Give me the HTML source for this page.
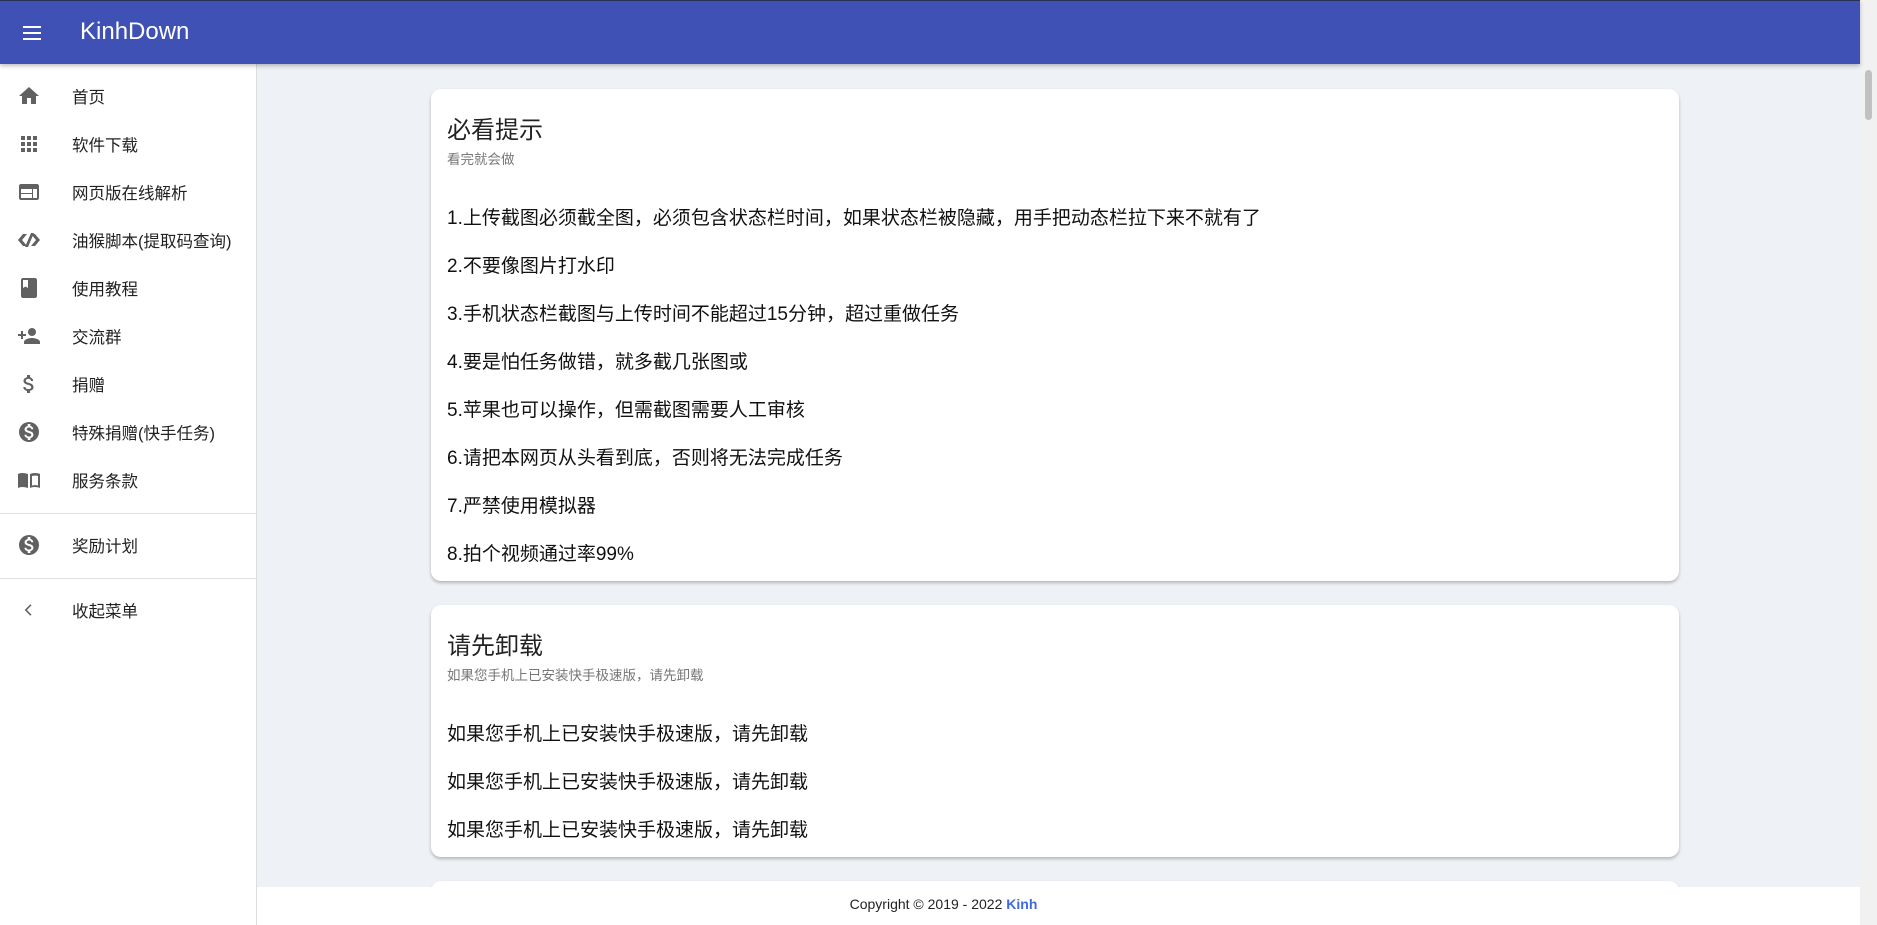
<!DOCTYPE html>
<html style="overflow:hidden;height:925px"><head><meta charset="utf-8"><style>
*{box-sizing:border-box;margin:0;padding:0}
body{width:1877px;height:925px;overflow:hidden;background:#eef1f6;font-family:"Liberation Sans","Noto Sans CJK SC",sans-serif;position:relative}
.hdr{position:absolute;left:0;top:0;width:1860px;height:64px;background:#3f51b5;border-top:1px solid #2a2f55;box-shadow:0 2px 4px rgba(0,0,0,.25);z-index:3}
.hdr .t{position:absolute;left:80px;top:17px;color:#fff;font-size:24px}
.menu{position:absolute;left:23px;top:25px;width:18px}
.menu i{display:block;height:2px;background:#fff;margin-bottom:4px}
.side{position:absolute;left:0;top:64px;width:257px;height:861px;background:#fff;border-right:1px solid #ddd;z-index:2}
.it{position:absolute;left:0;height:48px;width:256px}
.it svg{position:absolute;left:17px;top:12px;width:24px;height:24px;fill:#616161}
.it span{position:absolute;left:72px;top:12px;font-size:16.5px;color:#222}
.hr{position:absolute;left:0;width:256px;height:1px;background:#e0e0e0}
.card{position:absolute;left:431px;width:1248px;background:#fff;border-radius:10px;box-shadow:0 2px 3px rgba(0,0,0,.25)}
.card h2{position:absolute;left:16px;font-size:24px;font-weight:normal;color:#222}
.card .s{position:absolute;left:16px;font-size:13.5px;color:#777}
.card p{position:absolute;left:16px;font-size:19px;color:#111}
.sb{position:absolute;right:0;top:0;width:17px;height:925px;background:#f1f1f1}
.sb i{position:absolute;left:5px;top:70px;width:7px;height:50px;background:#c1c1c1;border-radius:4px}
.ft{position:absolute;left:257px;top:887px;width:1603px;height:38px;background:#fff;z-index:2;font-size:14px;color:#222;text-align:center;line-height:34px;padding-right:230px}
.ft b{color:#3f6ae0}
</style></head><body>
<div class="hdr"><div class="menu"><i></i><i></i><i></i></div><div class="t">KinhDown</div></div>
<div class="side">
<div class="it" style="top:8px"><svg viewBox="0 0 24 24"><path d="M10 20v-6h4v6h5v-8h3L12 3 2 12h3v8z"/></svg><span>首页</span></div>
<div class="it" style="top:56px"><svg viewBox="0 0 24 24"><path d="M4 4h4v4H4zm6 0h4v4h-4zm6 0h4v4h-4zM4 10h4v4H4zm6 0h4v4h-4zm6 0h4v4h-4zM4 16h4v4H4zm6 0h4v4h-4zm6 0h4v4h-4z"/></svg><span>软件下载</span></div>
<div class="it" style="top:104px"><svg viewBox="0 0 24 24"><path d="M20 4H4c-1.1 0-2 .9-2 2v12c0 1.1.9 2 2 2h16c1.1 0 2-.9 2-2V6c0-1.1-.9-2-2-2zm-5 14H4v-4h11v4zm0-5H4V9h11v4zm5 5h-4V9h4v9z"/></svg><span>网页版在线解析</span></div>
<div class="it" style="top:152px"><svg viewBox="0 0 24 24"><path d="M1 12l5-6h4l-5 6 5 6H6zm22 0l-5 6h-4l5-6-5-6h4zM8 19l6-14h3l-6 14z"/></svg><span>油猴脚本(提取码查询)</span></div>
<div class="it" style="top:200px"><svg viewBox="0 0 24 24"><path d="M18 2H6c-1.1 0-2 .9-2 2v16c0 1.1.9 2 2 2h12c1.1 0 2-.9 2-2V4c0-1.1-.9-2-2-2zM6 4h5v8l-2.5-1.5L6 12V4z"/></svg><span>使用教程</span></div>
<div class="it" style="top:248px"><svg viewBox="0 0 24 24"><path d="M15 12c2.2 0 4-1.8 4-4s-1.8-4-4-4-4 1.8-4 4 1.8 4 4 4zm-9-2V7H4v3H1v2h3v3h2v-3h3v-2H6zm9 4c-2.7 0-8 1.3-8 4v2h16v-2c0-2.7-5.3-4-8-4z"/></svg><span>交流群</span></div>
<div class="it" style="top:296px"><svg viewBox="0 0 24 24"><path d="M11.8 10.9c-2.3-.6-3-1.2-3-2.1 0-1.1 1-1.9 2.7-1.9 1.8 0 2.4.8 2.5 2.1h2.2c-.1-1.7-1.1-3.3-3.2-3.8V3h-3v2.2c-1.9.4-3.5 1.7-3.5 3.600 0 2.3 1.9 3.5 4.7 4.1 2.5.6 3 1.5 3 2.4 0 .7-.5 1.8-2.7 1.8-2.1 0-2.9-.9-3-2.1H6.3c.1 2.2 1.8 3.5 3.7 3.9V21h3v-2.2c1.9-.4 3.5-1.5 3.5-3.6 0-2.8-2.4-3.8-4.7-4.3z"/></svg><span>捐赠</span></div>
<div class="it" style="top:344px"><svg viewBox="0 0 24 24"><path d="M12 2a10 10 0 100 20 10 10 0 000-20zm1.4 16.1V20h-2.7v-1.9c-1.7-.4-3.2-1.5-3.3-3.4h2c.1 1 .8 1.8 2.6 1.8 1.9 0 2.3-.9 2.3-1.5 0-.8-.4-1.5-2.6-2.1-2.4-.6-4.1-1.6-4.1-3.6 0-1.7 1.4-2.8 3.1-3.2V4h2.7v1.9c1.9.5 2.8 1.9 2.9 3.4h-2c-.1-1.1-.6-1.8-2.2-1.8-1.5 0-2.4.7-2.4 1.6 0 .8.7 1.4 2.6 1.9 2 .5 4.1 1.4 4.1 3.8 0 1.8-1.3 2.8-3 3.3z"/></svg><span>特殊捐赠(快手任务)</span></div>
<div class="it" style="top:392px"><svg viewBox="0 0 24 24"><path d="M1 6c2-1.3 6-1.5 10 0v14c-4-1.5-8-1.3-10 0zm12 0c2-1.3 8-1.5 10 0v14c-2-1.3-8-1.5-10 0zm2 2v9.5c2-.5 4.5-.5 6 0V8c-1.5-.5-4-.5-6 0z"/></svg><span>服务条款</span></div>
<div class="hr" style="top:449px"></div>
<div class="it" style="top:457px"><svg viewBox="0 0 24 24"><path d="M12 2a10 10 0 100 20 10 10 0 000-20zm1.4 16.1V20h-2.7v-1.9c-1.7-.4-3.2-1.5-3.3-3.4h2c.1 1 .8 1.8 2.6 1.8 1.9 0 2.3-.9 2.3-1.5 0-.8-.4-1.5-2.6-2.1-2.4-.6-4.1-1.6-4.1-3.6 0-1.7 1.4-2.8 3.1-3.2V4h2.7v1.9c1.9.5 2.8 1.9 2.9 3.4h-2c-.1-1.1-.6-1.8-2.2-1.8-1.5 0-2.4.7-2.4 1.6 0 .8.7 1.4 2.6 1.9 2 .5 4.1 1.4 4.1 3.8 0 1.8-1.3 2.8-3 3.3z"/></svg><span>奖励计划</span></div>
<div class="hr" style="top:514px"></div>
<div class="it" style="top:522px"><svg viewBox="0 0 24 24"><path d="M14.5 7.4L13.4 6.3 7.7 12l5.7 5.7 1.1-1.1L9.9 12z"/></svg><span>收起菜单</span></div>
</div>
<div class="card" style="top:89px;height:492px">
<h2 style="top:21px">必看提示</h2><div class="s" style="top:59px">看完就会做</div>
<p style="top:114px">1.上传截图必须截全图，必须包含状态栏时间，如果状态栏被隐藏，用手把动态栏拉下来不就有了</p>
<p style="top:162px">2.不要像图片打水印</p>
<p style="top:210px">3.手机状态栏截图与上传时间不能超过15分钟，超过重做任务</p>
<p style="top:258px">4.要是怕任务做错，就多截几张图或</p>
<p style="top:306px">5.苹果也可以操作，但需截图需要人工审核</p>
<p style="top:354px">6.请把本网页从头看到底，否则将无法完成任务</p>
<p style="top:402px">7.严禁使用模拟器</p>
<p style="top:450px">8.拍个视频通过率99%</p>
</div>
<div class="card" style="top:605px;height:252px">
<h2 style="top:21px">请先卸载</h2><div class="s" style="top:59px">如果您手机上已安装快手极速版，请先卸载</div>
<p style="top:114px">如果您手机上已安装快手极速版，请先卸载</p>
<p style="top:162px">如果您手机上已安装快手极速版，请先卸载</p>
<p style="top:210px">如果您手机上已安装快手极速版，请先卸载</p>
</div>
<div class="card" style="top:881px;height:40px"></div>
<div class="ft">Copyright © 2019 - 2022 <b>Kinh</b></div>
<div class="sb"><i></i></div>
</body></html>
